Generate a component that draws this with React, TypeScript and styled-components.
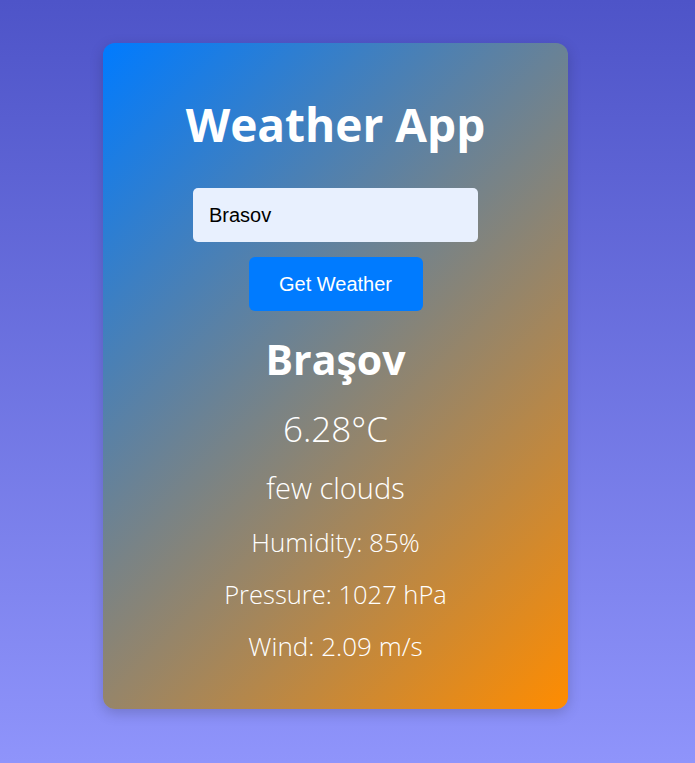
import React from "react";
import styled, { createGlobalStyle } from "styled-components";

const Global = createGlobalStyle`
  html, body { margin: 0; padding: 0; }
  body {
    font-family: "Open Sans", "Noto Sans", sans-serif;
    background: linear-gradient(to bottom, #4e54c8, #8f94fb);
    min-height: 100vh;
  }
`;

const Page = styled.div`
  min-height: 100vh;
  box-sizing: border-box;
  padding: 43px 0 40px 103px;
`;

const Card = styled.div`
  width: 465px;
  height: 666px;
  box-sizing: border-box;
  border-radius: 12px;
  background: linear-gradient(135deg, #007bff, #ff8c00);
  box-shadow: 0 4px 14px rgba(0, 0, 0, 0.18);
  color: #fff;
  display: flex;
  flex-direction: column;
  align-items: center;
  padding-top: 48px;
`;

const Title = styled.h1`
  margin: 0;
  font-size: 46px;
  line-height: 66px;
  font-weight: 700;
`;

const Search = styled.div`
  display: flex;
  flex-direction: column;
  align-items: center;
  gap: 15px;
  margin-top: 31px;
`;

const Input = styled.input`
  width: 285px;
  height: 54px;
  box-sizing: border-box;
  padding: 0 16px;
  border: none;
  border-radius: 5px;
  background: #e8f0fe;
  color: #000;
  font-family: "Liberation Sans", Arial, sans-serif;
  font-size: 20px;
  outline: none;
`;

const Button = styled.button`
  width: 174px;
  height: 54px;
  border: none;
  border-radius: 6px;
  background: #007bff;
  color: #fff;
  font-family: "Liberation Sans", Arial, sans-serif;
  font-size: 20px;
  cursor: pointer;
`;

const City = styled.h2`
  margin: 9px 0 0;
  font-size: 41px;
  line-height: 78px;
  font-weight: 700;
`;

const Line = styled.p<{ $size: number; $h: number }>`
  margin: 0;
  font-size: ${(p) => p.$size}px;
  line-height: ${(p) => p.$h}px;
  font-weight: 350;
`;

export default function App() {
  return (
    <>
      <Global />
      <Page>
        <Card>
          <Title>Weather App</Title>
          <Search>
            <Input defaultValue="Brasov" />
            <Button>Get Weather</Button>
          </Search>
          <City>Braşov</City>
          <Line $size={35} $h={62}>6.28°C</Line>
          <Line $size={29} $h={56}>few clouds</Line>
          <Line $size={26} $h={52}>Humidity: 85%</Line>
          <Line $size={25.5} $h={52}>Pressure: 1027 hPa</Line>
          <Line $size={26} $h={52}>Wind: 2.09 m/s</Line>
        </Card>
      </Page>
    </>
  );
}
